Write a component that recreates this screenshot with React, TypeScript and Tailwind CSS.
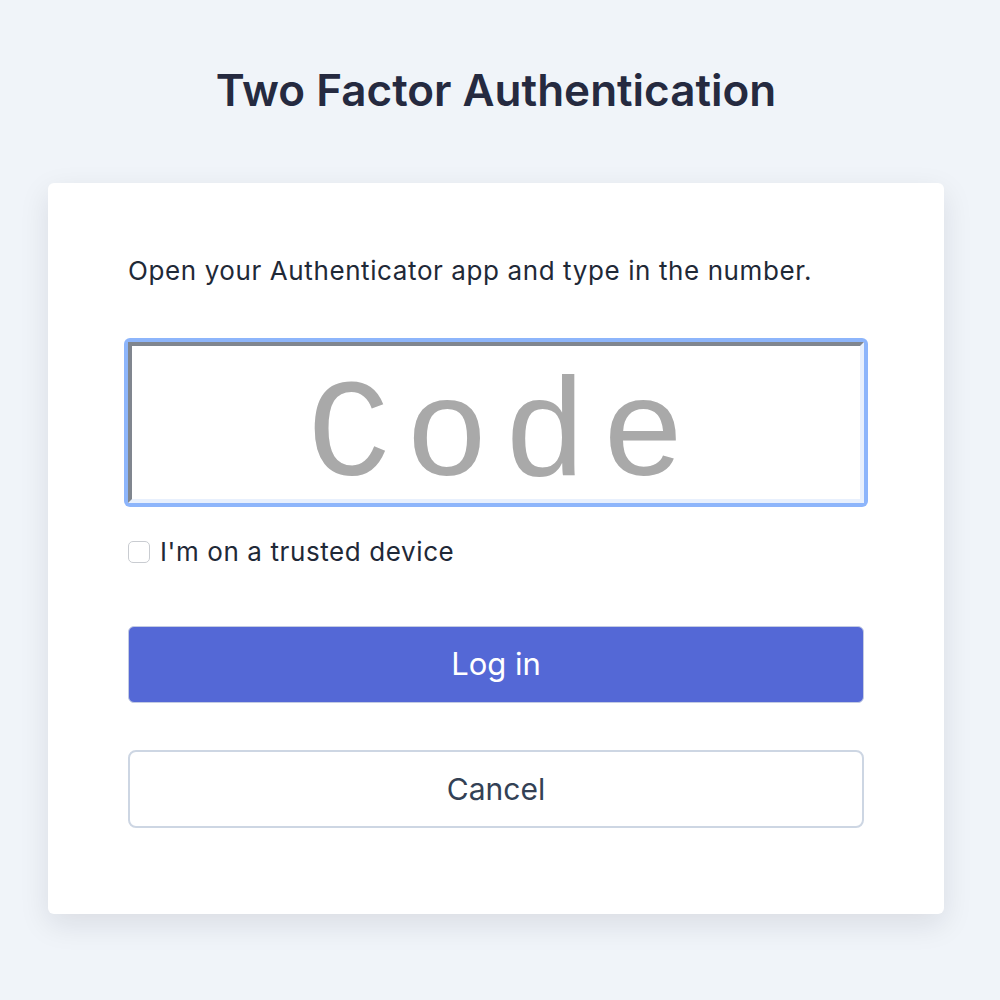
export default function App() {
  return (
    <div className="min-h-screen bg-[#f0f4f9] font-['Inter',sans-serif]">
      <div className="w-[992px] pt-[62px]">
        <h1 className="text-center text-[44px] font-semibold leading-[56px] text-[#252a40]">
          Two Factor Authentication
        </h1>

        <div className="mx-auto mt-[65px] w-[896px] rounded-md bg-white px-20 pb-[86px] pt-[72px] shadow-[0_10px_30px_rgba(15,23,42,0.10)]">
          <p className="text-[26px] leading-[32px] tracking-[0.6px] text-[#1f2937]">
            Open your Authenticator app and type in the number.
          </p>

          <div className="-mx-1 mt-[51px] rounded-md bg-[#8db5fb] p-1">
            <input
              type="text"
              placeholder="Code"
              className="block h-[161px] w-full border-[4px] border-b-[#e8f0fd] border-l-[#80868f] border-r-[#e8f0fd] border-t-[#80868f] bg-white p-0 pl-[14px] pt-[30px] text-center font-['Liberation_Mono',monospace] text-[140px] leading-none tracking-[14px] text-[#111] outline-none placeholder:text-[#a9a9a9]"
            />
          </div>

          <label className="mt-[29px] flex items-center gap-[10px]">
            <input
              type="checkbox"
              className="h-[22px] w-[22px] appearance-none rounded-[5px] border border-[#c9ccd1] bg-white"
            />
            <span className="text-[26px] leading-[32px] tracking-[0.6px] text-[#1f2937]">
              I'm on a trusted device
            </span>
          </label>

          <button className="mt-[58px] block h-[77px] w-full rounded-md border border-[#c3cbe3] bg-[#5468d6] text-[31px] text-white">
            Log in
          </button>

          <button className="mt-[47px] block h-[78px] w-full rounded-lg border-2 border-[#cdd6e3] bg-white text-[30px] text-[#334155]">
            Cancel
          </button>
        </div>
      </div>
    </div>
  );
}
